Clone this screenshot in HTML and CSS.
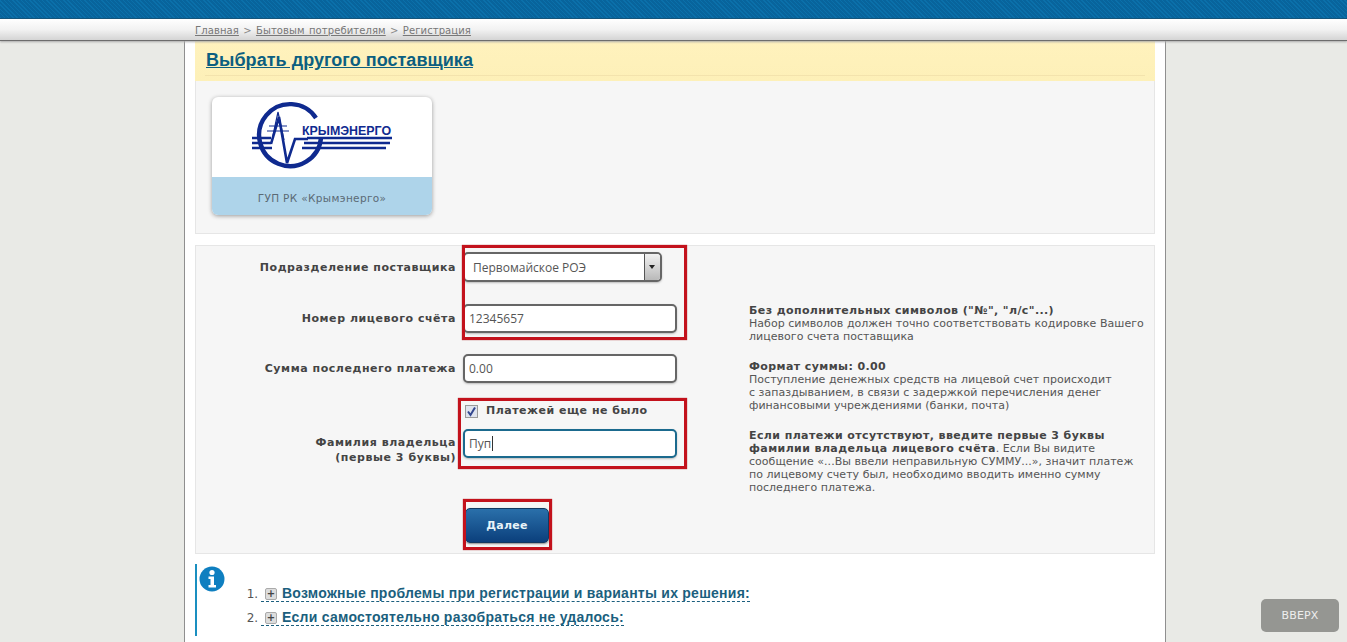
FILE: index.html
```html
<!DOCTYPE html>
<html>
    <head>
        <meta charset="utf-8">
        <title>Регистрация</title>
        <link rel="stylesheet" href="styles.css">
    </head>
    <body>
    <div class="top-bar"></div>
    <div class="crumbs-bar">
        <div class="crumbs">
            <a href="#">Главная</a> &gt; <a href="#">Бытовым потребителям</a> &gt; <a href="#">Регистрация</a>
        </div>
    </div>
    <div class="page">
        <div class="supplier-head">
            <h1 class="supplier-title"><a href="#">Выбрать другого поставщика</a></h1>
        </div>
        <div class="supplier-panel">
            <div class="supplier-card">
                <div class="card-logo">
                    <svg width="220" height="80" viewBox="0 0 220 80">
                        <path d="M104 21 A31 31 0 1 0 109 41" fill="none" stroke="#0f2a8f" stroke-width="4.4"/>
                        <path d="M40 41H59M40 46H59M40 51H60M95 41H180M92 46H178M90 51H174" stroke="#0f2a8f" stroke-width="2.4"/>
                        <path d="M59 47 L67 20 L75 66 L83 42 H96" fill="none" stroke="#0f2a8f" stroke-width="2.6"/>
                        <path d="M66 15 L60 43 M66 15 L72 43 M57 29 H75 M55 34 H77" fill="none" stroke="#0f2a8f" stroke-width="1.2"/>
                        <text class="logo-text" x="90" y="38">КРЫМЭНЕРГО</text>
                    </svg>
                </div>
                <div class="card-name">ГУП РК «Крымэнерго»</div>
            </div>
        </div>
        <div class="form-panel">
            <div class="form-grid">
                <label class="field-label row-select">Подразделение поставщика</label>
                <div class="select-box row-select">
                    <span class="select-value">Первомайское РОЭ</span>
                    <span class="select-arrow"></span>
                </div>
                <label class="field-label row-account">Номер лицевого счёта</label>
                <input class="text-input row-account" type="text" value="12345657">
                <label class="field-label row-sum">Сумма последнего платежа</label>
                <input class="text-input row-sum" type="text" value="0.00">
                <div class="check-line row-check">
                    <span class="check-box">
                        <svg width="13" height="13" viewBox="0 0 13 13"><path d="M3 6.5 L5.5 10 L10 2.5" fill="none" stroke="#33478f" stroke-width="2"/></svg>
                    </span>
                    Платежей еще не было
                </div>
                <label class="field-label owner-label">Фамилия владельца<br>(первые 3 буквы)</label>
                <div class="text-input focused row-owner">Пуп<span class="caret"></span></div>
                <button class="next-button">Далее</button>
            </div>
            <div class="hints">
                <p class="hint"><b>Без дополнительных символов ("№", "л/с"...)</b><br>Набор символов должен точно соответствовать кодировке Вашего<br>лицевого счета поставщика</p>
                <p class="hint"><b>Формат суммы: 0.00</b><br>Поступление денежных средств на лицевой счет происходит<br>с запаздыванием, в связи с задержкой перечисления денег<br>финансовыми учреждениями (банки, почта)</p>
                <p class="hint"><b>Если платежи отсутствуют, введите первые 3 буквы<br>фамилии владельца лицевого счёта</b>. Если Вы видите<br>сообщение «...Вы ввели неправильную СУММУ...», значит платеж<br>по лицевому счету был, необходимо вводить именно сумму<br>последнего платежа.</p>
            </div>
            <div class="mark mark-top"></div>
            <div class="mark mark-owner"></div>
            <div class="mark mark-next"></div>
        </div>
        <div class="info-block">
            <svg class="info-icon" width="26" height="26" viewBox="0 0 26 26">
                <circle cx="13" cy="13" r="12.5" fill="#0f7fc0"/>
                <circle cx="13" cy="6.5" r="2.6" fill="#fff"/>
                <path d="M9.5 10.5H15V19H17V21.5H9.5V19H11.5V13H9.5Z" fill="#fff"/>
            </svg>
            <ol class="info-list">
                <li><a class="info-link" href="#"><span class="plus">+</span>Возможные проблемы при регистрации и варианты их решения:</a></li>
                <li><a class="info-link" href="#"><span class="plus">+</span>Если самостоятельно разобраться не удалось:</a></li>
            </ol>
        </div>
    </div>
    <a class="to-top" href="#">ВВЕРХ</a>
    </body>
</html>
```

FILE: styles.css
```css
html, body {
    height: 642px;
    overflow: hidden;
}
body {
    margin: 0;
    background-color: #e9eae6;
    font-family: "DejaVu Sans", Verdana, sans-serif;
    font-size: 10px;
    color: #444;
}
.top-bar {
    height: 18px;
    background-color: #0a6aa3;
    background-image: repeating-linear-gradient(45deg, #0b70aa 0, #0b70aa 1px, #08649c 1px, #08649c 3px);
    border-bottom: 1px solid #0a4f78;
}
.crumbs-bar {
    height: 21px;
    background: linear-gradient(#ffffff, #f2f2f2 50%, #d4d4d4);
    border-bottom: 1px solid #6d6d6d;
    box-shadow: 0 1px 2px #aaa;
    position: relative;
}
.crumbs {
    margin-left: 195px;
    padding-top: 6px;
    line-height: 12px;
    color: #888;
    letter-spacing: 0.1px;
    word-spacing: 1px;
}
.crumbs a {
    color: #777;
}
.page {
    box-sizing: border-box;
    width: 982px;
    height: 602px;
    margin-left: 184px;
    padding: 0 10px;
    background-color: #fff;
    border-left: 1px solid #8f8f8f;
    border-right: 1px solid #8f8f8f;
}
.supplier-head {
    height: 40px;
    padding: 0 10px;
    background: linear-gradient(#fff2bd, #fdf0b8);
}
.supplier-title {
    margin: 0;
    height: 35px;
    box-sizing: border-box;
    padding: 9px 0 0 1px;
    font: bold 18px/20px "Liberation Sans", Arial, sans-serif;
    letter-spacing: 0.04px;
    border-bottom: 1px solid #f3e3ad;
}
.supplier-title a {
    color: #0c5f80;
}
.supplier-panel {
    height: 153px;
    box-sizing: border-box;
    padding: 16px;
    background-color: #f6f6f6;
    border: 1px solid #e6e6e6;
    border-top: 0;
}
.supplier-card {
    width: 220px;
    height: 118px;
    border-radius: 6px;
    overflow: hidden;
    background-color: #fff;
    box-shadow: 0 1px 4px #999;
}
.card-logo {
    height: 80px;
}
.logo-text {
    font: bold 12.4px "Liberation Sans", Arial, sans-serif;
    fill: #0f2a8f;
}
.card-name {
    height: 38px;
    background-color: #aed4ea;
    text-align: center;
    line-height: 42px;
    font-size: 10.5px;
    letter-spacing: 0.35px;
    color: #5b6a75;
}
.form-panel {
    position: relative;
    display: flex;
    height: 309px;
    box-sizing: border-box;
    margin-top: 11px;
    background-color: #f6f6f6;
    border: 1px solid #e6e6e6;
}
.form-grid {
    display: grid;
    width: 481px;
    flex: none;
    grid-template-columns: 260px 214px;
    column-gap: 7px;
    padding-top: 6px;
    align-content: start;
}
.field-label {
    grid-column: 1;
    align-self: center;
    text-align: right;
    font-size: 11px;
    line-height: 15px;
    font-weight: bold;
    letter-spacing: 0.55px;
    color: #444;
}
.row-select { grid-row: 1; }
.row-account { grid-row: 2; margin-top: 22px; }
.row-sum { grid-row: 3; margin-top: 21px; }
.row-check { grid-row: 4; margin-top: 19px; }
.row-owner { grid-row: 5; margin-top: 9px; }
.field-label.row-account, .field-label.row-sum {
    margin-top: 0;
    align-self: end;
    padding-bottom: 7px;
}
.owner-label {
    grid-row: 5;
    align-self: start;
    margin-top: 15px;
}
.text-input {
    grid-column: 2;
    box-sizing: border-box;
    width: 214px;
    height: 29px;
    padding: 0 4px;
    border: 2px solid #666;
    border-radius: 5px;
    background-color: #fff;
    box-shadow: 0 1px 2px #bbb;
    font: 12px/25px "Open Sans", "DejaVu Sans", sans-serif;
    color: #555;
    outline: none;
}
.text-input.focused {
    border-color: #1b6a8e;
}
.caret {
    display: inline-block;
    width: 1px;
    height: 15px;
    margin-left: 1px;
    vertical-align: -3px;
    background-color: #333;
}
.select-box {
    grid-column: 2;
    display: flex;
    justify-content: space-between;
    box-sizing: border-box;
    width: 199px;
    height: 30px;
    border: 2px solid #666;
    border-radius: 5px;
    background-color: #fff;
    box-shadow: 0 1px 2px #bbb;
    overflow: hidden;
}
.select-value {
    padding-left: 8px;
    font: 12px/27px "Open Sans", "DejaVu Sans", sans-serif;
    color: #555;
}
.select-arrow {
    position: relative;
    width: 15px;
    background: linear-gradient(#f1f1f1, #b9b9b9);
    border-left: 1px solid #555;
}
.select-arrow::after {
    content: "";
    position: absolute;
    top: 11px;
    left: 4px;
    border-top: 4px solid #222;
    border-left: 3.5px solid transparent;
    border-right: 3.5px solid transparent;
}
.check-line {
    grid-column: 2;
    display: flex;
    align-items: center;
    gap: 8px;
    height: 18px;
    padding-left: 2px;
    font-size: 11px;
    line-height: 14px;
    font-weight: bold;
    letter-spacing: 0.5px;
    white-space: nowrap;
    color: #444;
}
.check-box {
    display: block;
    box-sizing: border-box;
    width: 13px;
    height: 13px;
    border: 1px solid #9a9a9a;
    background-color: #dfe3ee;
}
.check-box svg {
    display: block;
    margin: -1px;
}
.next-button {
    grid-column: 2;
    grid-row: 6;
    width: 84px;
    height: 35px;
    margin: 43px 0 0 2px;
    border: 1px solid #12385f;
    border-radius: 5px;
    background: linear-gradient(#2a70aa, #0b3f7c);
    box-shadow: 0 1px 2px #888;
    font-family: "DejaVu Sans", Verdana, sans-serif;
    font-size: 11px;
    font-weight: bold;
    letter-spacing: 0.3px;
    color: #e8f3f8;
    padding: 0;
}
.hints {
    margin-left: 72px;
    padding-top: 58px;
    font-size: 11px;
    line-height: 13px;
    letter-spacing: 0.03px;
    color: #555;
    white-space: nowrap;
}
.hint {
    margin: 0 0 17px;
}
.hint b {
    color: #444;
    letter-spacing: 0.4px;
}
.mark {
    position: absolute;
    box-sizing: border-box;
    border: 3px solid #c3121c;
    box-shadow: 0 0 1px #a33;
}
.mark-top {
    top: -1px;
    left: 266px;
    width: 225px;
    height: 95px;
}
.mark-owner {
    top: 152px;
    left: 262px;
    width: 229px;
    height: 71px;
}
.mark-next {
    top: 253px;
    left: 267px;
    width: 89px;
    height: 51px;
}
.info-block {
    display: flex;
    height: 72px;
    margin-top: 10px;
    border-left: 2px solid #1a8fc0;
}
.info-icon {
    margin: 2px 0 0 2px;
    flex: none;
}
.info-list {
    margin: 18px 0 0;
    padding-left: 37px;
    font: 12px/24px "DejaVu Sans", sans-serif;
    color: #555;
}
.info-link {
    font: bold 14px/18px "Liberation Sans", Arial, sans-serif;
    letter-spacing: 0.25px;
    color: #1b5f7e;
    text-decoration: none;
    border-bottom: 1px dashed #1b5f7e;
    margin-left: -1px;
}
.plus {
    display: inline-block;
    box-sizing: border-box;
    width: 12px;
    height: 12px;
    margin: 0 5px 0 4px;
    border: 1px solid #aaa;
    border-radius: 2px;
    background-color: #ddd;
    font: bold 10px/10px "DejaVu Sans", sans-serif;
    text-align: center;
    color: #444;
    vertical-align: 1px;
}
.to-top {
    position: fixed;
    top: 599px;
    left: 1261px;
    width: 78px;
    height: 33px;
    border-radius: 5px;
    background-color: #959692;
    text-align: center;
    font: 11px/34px "DejaVu Sans", sans-serif;
    letter-spacing: 0.2px;
    color: #eee;
    text-decoration: none;
}
```
